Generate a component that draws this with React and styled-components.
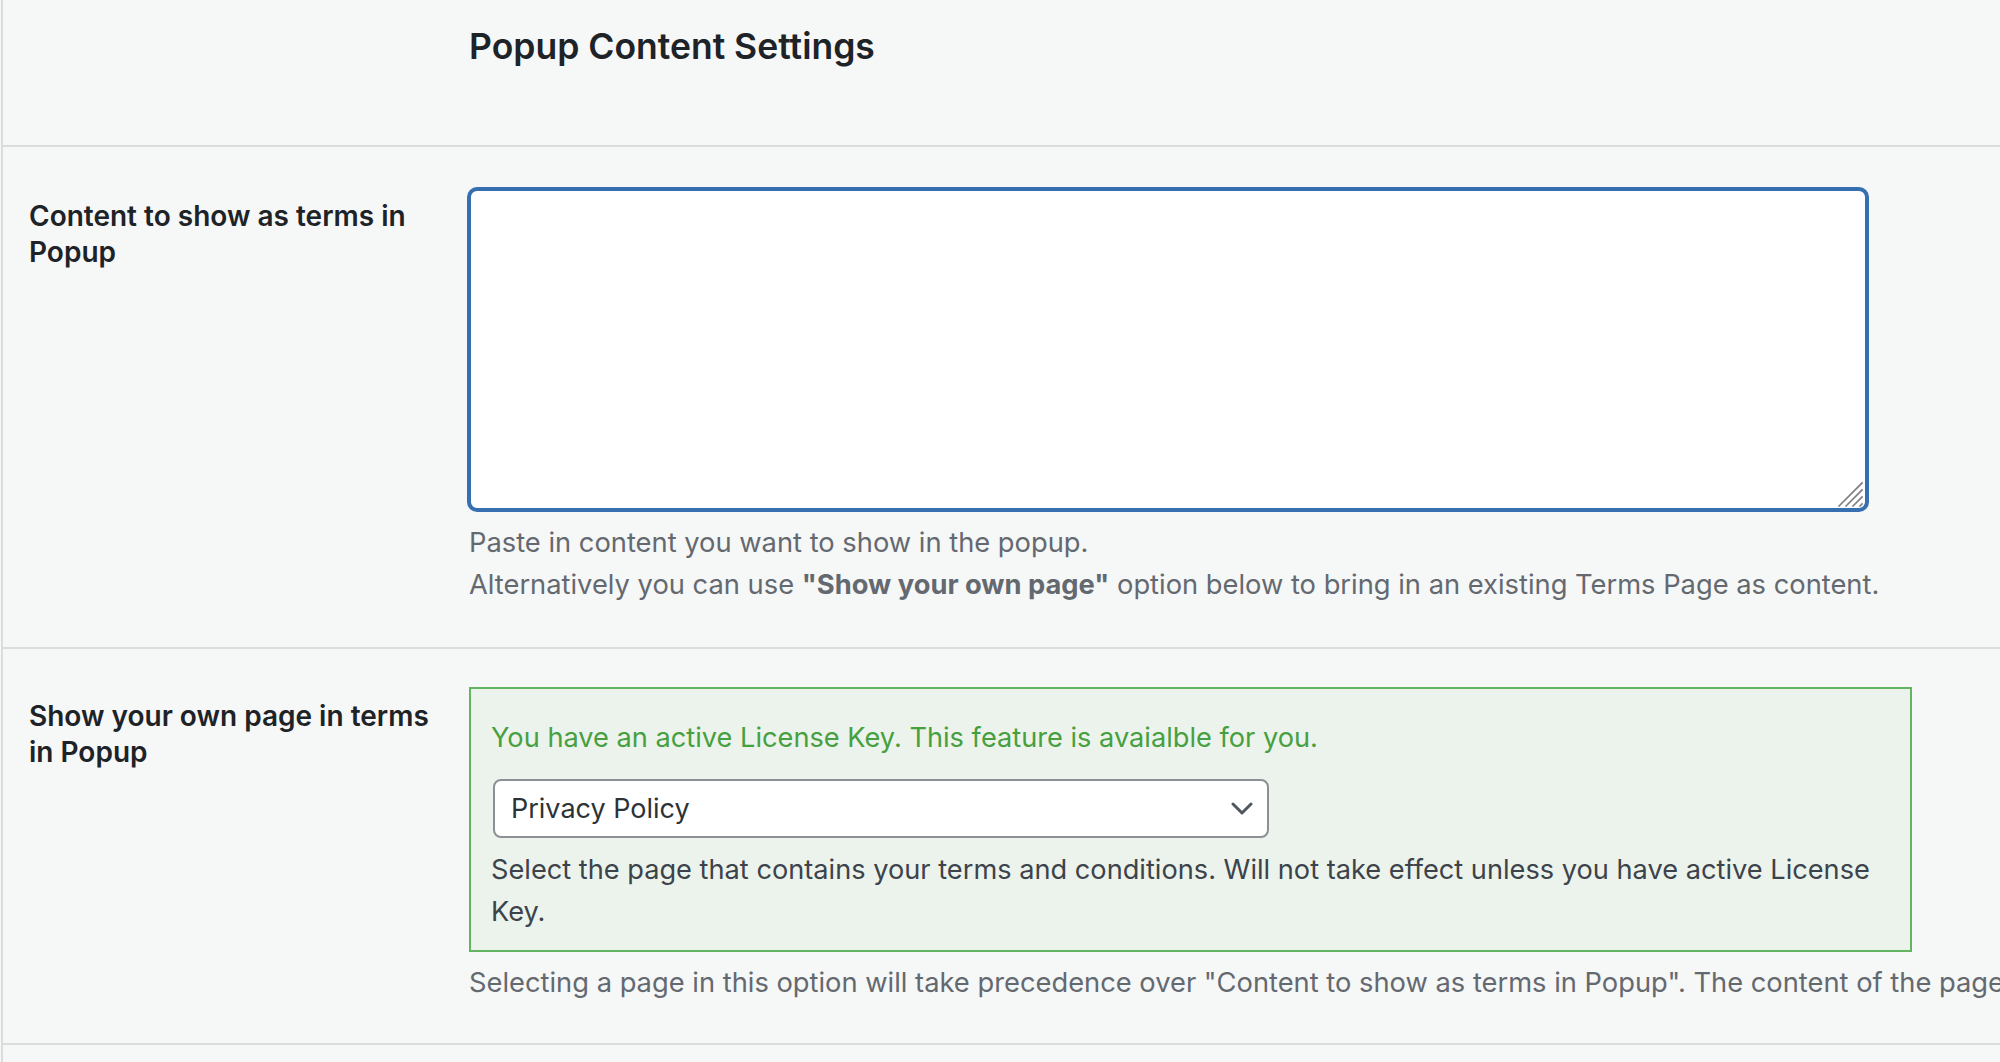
import React from 'react';
import styled, { createGlobalStyle } from 'styled-components';

const GlobalStyle = createGlobalStyle`
    html, body {
        margin:0;
        padding:0;
        background:#f6f7f7;
        overflow:hidden;
    }
    body {
        font-family: Inter, "Noto Sans", "Liberation Sans", sans-serif;
        color:#1d2327;
    }
`;

const Page = styled.div`
    margin-left:1px;
    min-height:1062px;
    border-left:2px solid #dcdcde;
`;

const Row = styled.div`
    display:grid;
    grid-template-columns:446px 1fr;
    border-bottom:2px solid #dcdcde;
`;

const Label = styled.div`
    padding:${props => props.top ?? 50}px 20px 0 26px;
    font-size:28px;
    font-weight:600;
    line-height:36px;
    color:#1d2327;
`;

const Field = styled.div`
    padding:${props => props.top ?? 42}px 0 ${props => props.bottom ?? 40}px 20px;
    min-width:0;
`;

const Title = styled.h2`
    margin:0;
    padding:24px 0 76px;
    font-size:35.5px;
    font-weight:600;
    line-height:44px;
    color:#1d2327;
`;

const AreaWrap = styled.div`
    position:relative;
    width:1398px;
`;

const TextArea = styled.textarea`
    display:block;
    box-sizing:border-box;
    width:100%;
    height:321px;
    margin:0;
    padding:12px 16px;
    border:2px solid #3770b0;
    border-radius:8px;
    box-shadow:0 0 0 2px #3770b0;
    background:#fff;
    outline:none;
    resize:none;
    font-family:inherit;
    font-size:27.2px;
`;

const Grip = styled.svg`
    position:absolute;
    right:4px;
    bottom:3px;
    width:26px;
    height:26px;
    pointer-events:none;
`;

const Description = styled.p`
    margin:${props => props.gap ?? 12}px 0 0;
    font-size:27.3px;
    line-height:42px;
    color:#646970;
    white-space:${props => props.nowrap ? 'nowrap' : 'normal'};

    b {
        font-weight:700;
    }
`;

const LicenseBox = styled.div`
    box-sizing:border-box;
    width:1443px;
    padding:28px 14px 17px 20px;
    border:2px solid #65b462;
    background:#ecf3ec;
`;

const Notice = styled.p`
    margin:0;
    font-size:27.2px;
    line-height:42px;
    color:#46a03f;
`;

const SelectWrap = styled.div`
    position:relative;
    width:776px;
    margin:20px 0 0 2px;
`;

const Select = styled.select`
    display:block;
    box-sizing:border-box;
    width:100%;
    height:59px;
    margin:0;
    padding:0 60px 0 16px;
    border:2px solid #8c8f94;
    border-radius:8px;
    background:#fff;
    appearance:none;
    font-family:inherit;
    font-size:27px;
    color:#2c3338;
    outline:none;
`;

const Chevron = styled.svg`
    position:absolute;
    right:16px;
    top:50%;
    width:22px;
    height:13px;
    margin-top:-7px;
    pointer-events:none;
`;

const BoxText = styled.p`
    margin:11px 0 0;
    font-size:27.2px;
    line-height:42px;
    color:#3c434a;
`;

function App() {
    return (
        <>
            <GlobalStyle />
            <Page>
                <Row>
                    <div />
                    <Field top={1} bottom={0}>
                        <Title>Popup Content Settings</Title>
                    </Field>
                </Row>

                <Row>
                    <Label top={51}>Content to show as terms in Popup</Label>
                    <Field top={42} bottom={41}>
                        <AreaWrap>
                            <TextArea defaultValue="" />
                            <Grip viewBox="0 0 26 26">
                                <g stroke="#7f7f7f" strokeWidth="1.6" strokeLinecap="square">
                                    <line x1="2" y1="25" x2="25" y2="2" />
                                    <line x1="9" y1="25" x2="25" y2="9" />
                                    <line x1="16" y1="25" x2="25" y2="16" />
                                    <line x1="23" y1="25" x2="25" y2="23" />
                                </g>
                            </Grip>
                        </AreaWrap>
                        <Description>
                            Paste in content you want to show in the popup.<br />
                            Alternatively you can use <b>"Show your own page"</b> option below to bring in an existing Terms Page as content.
                        </Description>
                    </Field>
                </Row>

                <Row>
                    <Label top={49}>Show your own page in terms in Popup</Label>
                    <Field top={38} bottom={39}>
                        <LicenseBox>
                            <Notice>You have an active License Key. This feature is avaialble for you.</Notice>
                            <SelectWrap>
                                <Select defaultValue="privacy">
                                    <option value="">— Select —</option>
                                    <option value="privacy">Privacy Policy</option>
                                    <option value="terms">Terms and Conditions</option>
                                </Select>
                                <Chevron viewBox="0 0 22 13" fill="none">
                                    <path d="M2 2 L11 11 L20 2" stroke="#50575e" strokeWidth="3" strokeLinecap="round" strokeLinejoin="round" />
                                </Chevron>
                            </SelectWrap>
                            <BoxText>Select the page that contains your terms and conditions. Will not take effect unless you have active License Key.</BoxText>
                        </LicenseBox>
                        <Description gap={10} nowrap>
                            Selecting a page in this option will take precedence over "Content to show as terms in Popup". The content of the page you select will be shown in the popup instead.
                        </Description>
                    </Field>
                </Row>
            </Page>
        </>
    );
}

export default App;
